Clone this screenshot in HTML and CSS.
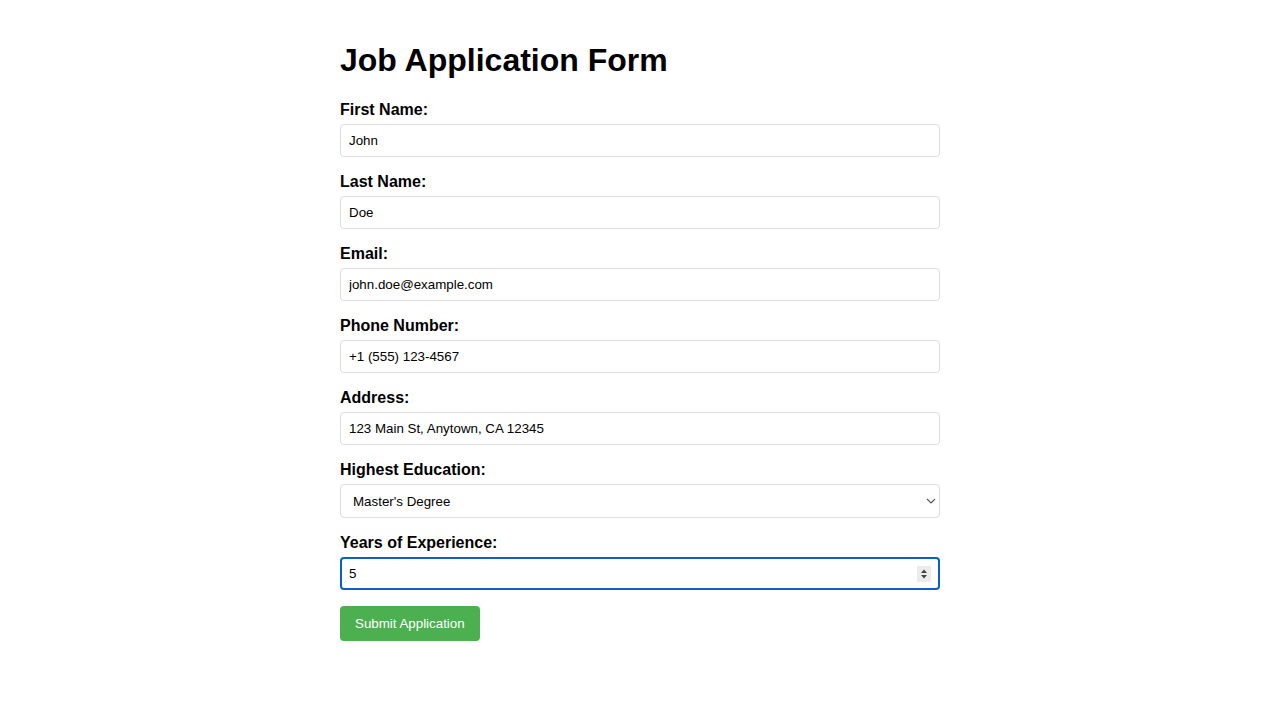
FILE: index.html
```html
<!DOCTYPE html>
<html lang="en">
<head>
<meta charset="utf-8">
<title>Job Application Form</title>
<link rel="stylesheet" href="styles.css">
</head>
<body>
<div class="container">
  <h1 class="title">Job Application Form</h1>
  <form class="form">
    <label class="label" for="first">First Name:</label>
    <input class="field" id="first" type="text" value="John">

    <label class="label" for="last">Last Name:</label>
    <input class="field" id="last" type="text" value="Doe">

    <label class="label" for="email">Email:</label>
    <input class="field" id="email" type="email" value="john.doe@example.com">

    <label class="label" for="phone">Phone Number:</label>
    <input class="field" id="phone" type="tel" value="+1 (555) 123-4567">

    <label class="label" for="address">Address:</label>
    <input class="field" id="address" type="text" value="123 Main St, Anytown, CA 12345">

    <label class="label" for="edu">Highest Education:</label>
    <div class="select-wrap">
      <select class="field select" id="edu">
        <option>High School</option>
        <option>Bachelor's Degree</option>
        <option selected>Master's Degree</option>
        <option>PhD</option>
      </select>
      <svg class="chevron" width="10" height="6" viewBox="0 0 10 6"><path d="M1 1 L5 5 L9 1" fill="none" stroke="#555" stroke-width="1.1"/></svg>
    </div>

    <label class="label" for="years">Years of Experience:</label>
    <div class="number-wrap">
      <input class="field number focused" id="years" type="number" value="5">
      <span class="spinner">
        <svg width="14" height="16" viewBox="0 0 14 16"><path d="M4 7 L7 3.5 L10 7 Z M4 9 L7 12.5 L10 9 Z" fill="#444"/></svg>
      </span>
    </div>

    <button class="submit" type="button">Submit Application</button>
  </form>
</div>
</body>
</html>
```

FILE: styles.css
```css
html, body {
  margin: 0;
  padding: 0;
  background: #fff;
}

body {
  font-family: "Liberation Sans", Arial, Helvetica, sans-serif;
  color: #000;
}

.container {
  max-width: 600px;
  margin: 0 auto;
  padding: 20px;
}

.title {
  font-size: 32px;
  font-weight: bold;
  line-height: 37px;
  margin: 22px 0 21px 0;
}

.form {
  display: flex;
  flex-direction: column;
}

.label {
  display: block;
  font-size: 16px;
  line-height: 19px;
  font-weight: bold;
  margin-bottom: 5px;
}

.field {
  display: block;
  box-sizing: border-box;
  width: 100%;
  height: 33px;
  padding: 8px;
  margin: 0 0 15px 0;
  border: 1px solid #ddd;
  border-radius: 4px;
  font-family: "Liberation Sans", Arial, Helvetica, sans-serif;
  font-size: 13.33px;
  line-height: 15px;
  color: #000;
  background: #fff;
  outline: none;
}

.select-wrap,
.number-wrap {
  position: relative;
}

.select {
  -webkit-appearance: none;
  appearance: none;
  height: 34px;
  padding: 0 8px 0 12px;
}

.chevron {
  position: absolute;
  right: 4px;
  top: 14px;
}

.number {
  -moz-appearance: textfield;
}

.number::-webkit-inner-spin-button,
.number::-webkit-outer-spin-button {
  -webkit-appearance: none;
  margin: 0;
}

.focused {
  border: 2px solid #0b5fcc;
  padding: 7px;
}

.spinner {
  position: absolute;
  right: 9px;
  top: 9px;
  width: 14px;
  height: 16px;
  background: #ececec;
  display: flex;
}

.submit {
  align-self: flex-start;
  background: #4caf50;
  color: #fff;
  border: none;
  border-radius: 4px;
  padding: 10px 15px;
  margin-top: 1px;
  font-family: "Liberation Sans", Arial, Helvetica, sans-serif;
  font-size: 13.33px;
  line-height: 15px;
  cursor: pointer;
}
```
